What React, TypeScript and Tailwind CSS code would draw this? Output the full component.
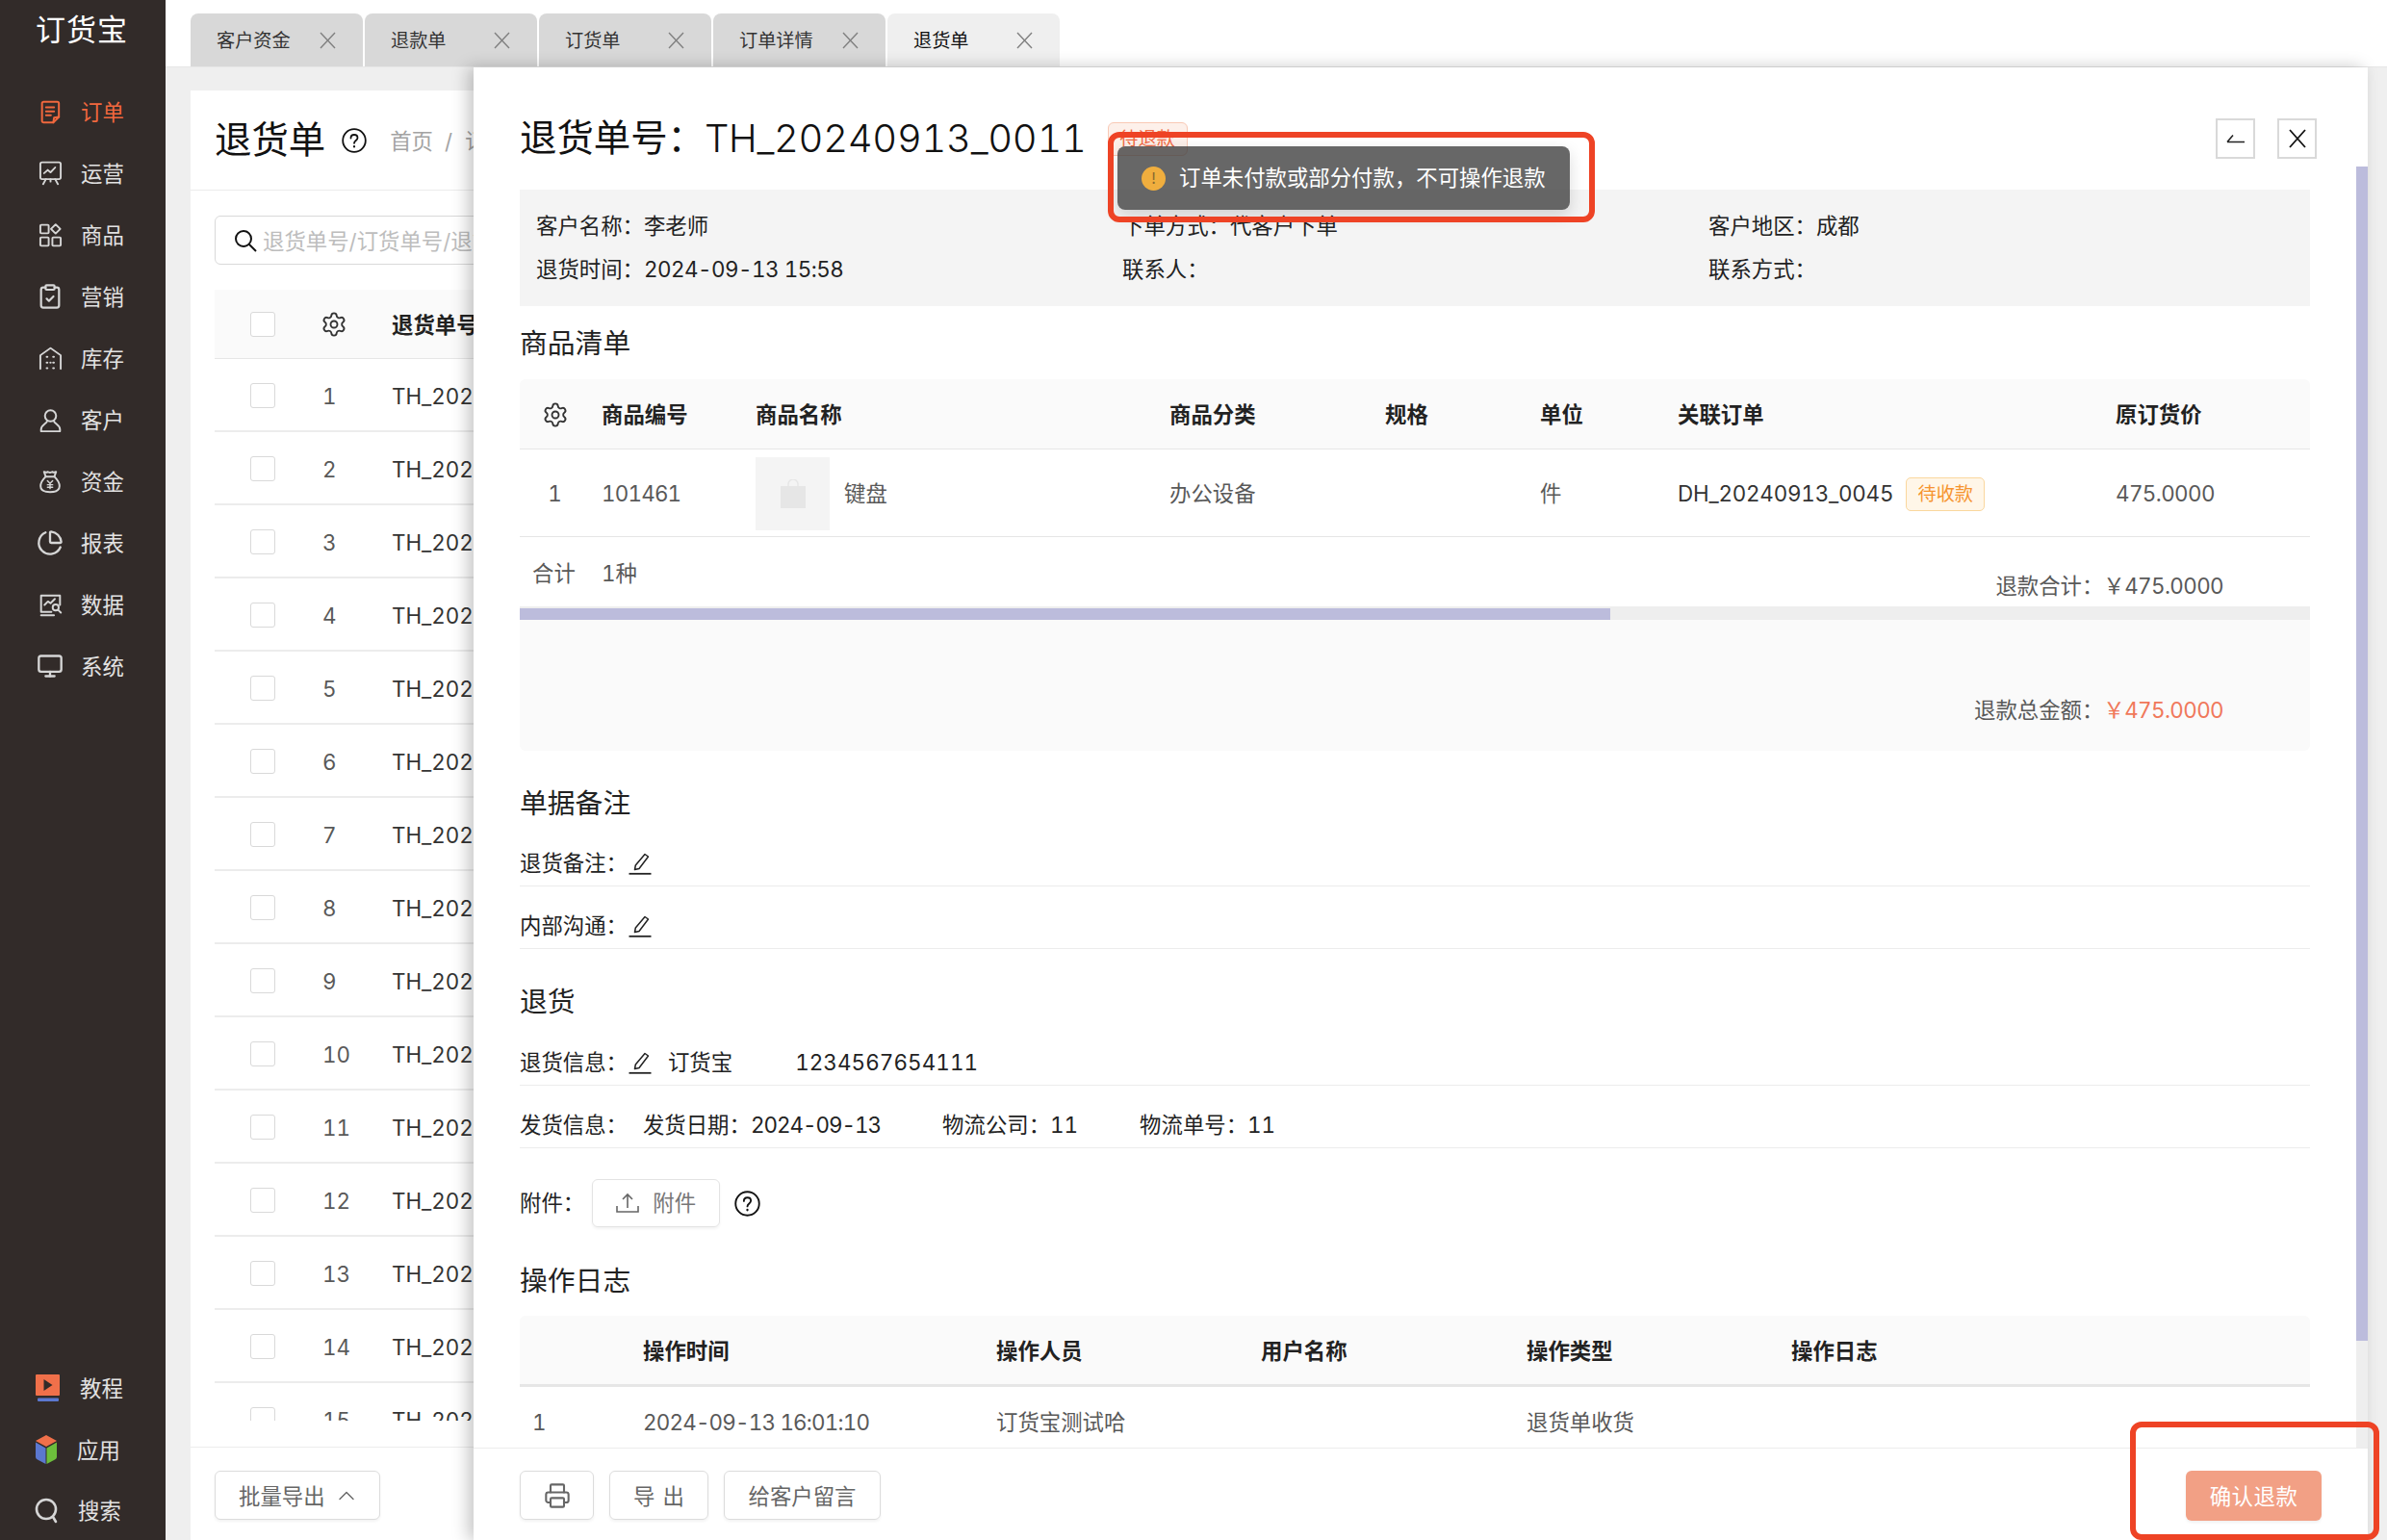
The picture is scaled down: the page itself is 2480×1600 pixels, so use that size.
import React from "react";
import { Settings, Printer, ClipboardCheck, ChartPie, Monitor, ChevronUp } from "lucide-react";

const stroke = { fill: "none", stroke: "currentColor", strokeWidth: 1.8, strokeLinecap: "round" as const, strokeLinejoin: "round" as const };

const OrderIcon = () => (
  <svg width="22" height="25" viewBox="0 0 26 30" {...stroke} strokeWidth={2.4}>
    <path d="M5 2h17a2 2 0 0 1 2 2v17l-7 7H5a2 2 0 0 1-2-2V4a2 2 0 0 1 2-2z" />
    <path d="M8 9h10M8 14h10M8 19h6M17 28l1-6 6-1" />
  </svg>
);
const OpsIcon = () => (
  <svg width="25" height="26" viewBox="0 0 26 30" preserveAspectRatio="none" {...stroke} strokeWidth={2}>
    <rect x="2" y="2" width="22" height="20" rx="2" />
    <path d="M6 15l4-4 3 3 5-6M8 22l-3 6M18 22l3 6M13 22v3" />
  </svg>
);
const GoodsIcon = () => (
  <svg width="25" height="26" viewBox="0 0 26 30" preserveAspectRatio="none" {...stroke} strokeWidth={2}>
    <rect x="2" y="3" width="9" height="10" rx="1" />
    <path d="M18.500 2.500l5 5.500-5 5.500-5-5.500z" />
    <rect x="2" y="18" width="9" height="10" rx="1" />
    <rect x="15" y="18" width="9" height="10" rx="1" />
  </svg>
);
const StockIcon = () => (
  <svg width="25" height="25" viewBox="0 0 26 30" preserveAspectRatio="none" {...stroke} strokeWidth={2}>
    <path d="M2 28V11L13 2l11 9v17" />
    <path d="M9 13h.5M16 13h.5M9 20h.5M16 20h.5M9 27h.5M16 27h.5M13 20v.1" strokeWidth={2.4} />
  </svg>
);
const UserIcon = () => (
  <svg width="25" height="25" viewBox="0 0 26 28" {...stroke} strokeWidth={2.2}>
    <circle cx="13" cy="9" r="6.500" />
    <path d="M9 15c0 3-7 4-7 10v2h22v-2c0-6-7-7-7-10" />
  </svg>
);
const BagIcon = () => (
  <svg width="24" height="25" viewBox="0 0 26 28" {...stroke} strokeWidth={2.2}>
    <path d="M8 8L6 2.500c2 1 3 1 4 0 2 1 4 1 6 0 1 1 2 1 4 0L18 8" />
    <path d="M8 8h10c3 3 6 7 6 11 0 5-4 7-11 7S2 24 2 19c0-4 3-8 6-11z" />
    <path d="M10 13l3 3 3-3M13 16v6M10 17.500h6M10 20.500h6" strokeWidth={1.6} />
  </svg>
);
const DataIcon = () => (
  <svg width="25" height="25" viewBox="0 0 26 28" {...stroke} strokeWidth={2.2}>
    <path d="M24 14V3H2v19h12M2 26h15" />
    <path d="M6 14l4-4 3 2 5-5" />
    <circle cx="19" cy="17" r="3.500" />
    <path d="M22 20l3 3" />
  </svg>
);
const PlayIcon = () => (
  <svg width="26" height="30" viewBox="0 0 26 30">
    <rect x="0" y="1" width="25" height="22" rx="1" fill="#f0704a" />
    <path d="M8.500 6l9 6-9 6z" fill="#322b29" />
    <rect x="2" y="25.500" width="22" height="3.500" rx="1" fill="#5b78d0" />
  </svg>
);
const CubeIcon = () => (
  <svg width="24" height="32" viewBox="0 0 24 32">
    <path d="M12 1l11 6-11 6L1 7z" fill="#f0704a" />
    <path d="M1 8.500l10.500 6V31L3 26.500a3 3 0 0 1-2-2.500z" fill="#5b78d0" />
    <path d="M23 8.500l-10.500 6V31l8.500-4.500a3 3 0 0 0 2-2.500z" fill="#6dbe3c" />
  </svg>
);
const SearchNavIcon = () => (
  <svg width="26" height="30" viewBox="0 0 26 30" {...stroke} strokeWidth={2.6}>
    <circle cx="12" cy="14" r="10" />
    <path d="M19 22l3 5" />
  </svg>
);
const EditIcon = () => (
  <svg width="24" height="24" viewBox="0 0 24 24" fill="none" stroke="#222" strokeWidth="1.500" strokeLinejoin="round" className="shrink-0">
    <path d="M17 2.500l3.500 2.500-9.500 12.500-4.500 1 .8-4.500z" />
    <path d="M0.500 22.800h23" strokeWidth="1.800" />
  </svg>
);
const HelpIcon = ({ size }: { size: number }) => (
  <svg width={size} height={size} viewBox="0 0 26 26" fill="none" stroke="#111" strokeWidth="1.800" strokeLinecap="round" className="shrink-0">
    <circle cx="13" cy="13" r="11.800" />
    <path d="M9.500 10.500c0-2.200 1.500-3.500 3.500-3.500s3.500 1.300 3.500 3.200c0 2.800-3.500 2.800-3.500 5.600" />
    <path d="M13 19.200v.3" strokeWidth="2.200" />
  </svg>
);
const CloseIcon = ({ w, h, color, sw }: { w: number; h: number; color: string; sw: number }) => (
  <svg width={w} height={h} viewBox={`0 0 ${w} ${h}`} fill="none" stroke={color} strokeWidth={sw} className="shrink-0">
    <path d={`M1 1L${w - 1} ${h - 1}M${w - 1} 1L1 ${h - 1}`} />
  </svg>
);

const tabs = ["客户资金", "退款单", "订货单", "订单详情", "退货单"];
const nav: [React.ReactNode, string][] = [
  [<OpsIcon />, "运营"],
  [<GoodsIcon />, "商品"],
  [<ClipboardCheck size={28} strokeWidth={1.9} />, "营销"],
  [<StockIcon />, "库存"],
  [<UserIcon />, "客户"],
  [<BagIcon />, "资金"],
  [<ChartPie size={28} strokeWidth={2} />, "报表"],
  [<DataIcon />, "数据"],
  [<Monitor size={28} strokeWidth={2} />, "系统"],
];
const rows = [1, 2, 3, 4, 5, 6, 7, 8, 9, 10, 11, 12, 13, 14, 15];

export default function App() {
  return (
    <div className="relative flex h-[1600px] w-[2480px] overflow-hidden bg-white font-[family-name:Inter,'Noto_Sans_CJK_SC',sans-serif] text-[22.4px] tabular-nums text-[#222]">
      <aside className="flex h-full w-[172px] shrink-0 flex-col bg-[#322b29] text-[#e2e2e2]">
        <div className="flex h-[84px] items-start pl-[37px] pt-[9px] text-[31px] leading-[44px] tracking-[1px] text-white">订货宝</div>
        <div className="flex h-[64px] items-center text-[#f0683e]">
          <span className="flex w-[84px] justify-center pl-[33px] pr-[13px]"><OrderIcon /></span>
          <span className="pt-[2px]">订单</span>
        </div>
        {nav.map(([icon, label]) => (
          <div key={label} className="flex h-[64px] items-center">
            <span className="flex w-[84px] justify-center pl-[33px] pr-[13px] text-[#d6d6d6]">{icon}</span>
            <span className="pt-[2px]">{label}</span>
          </div>
        ))}
        <div className="flex-1" />
        <div className="flex h-[64px] items-center">
          <span className="flex w-[83px] justify-center pl-[37px] pr-[20px]"><PlayIcon /></span>
          <span className="pt-[2px]">教程</span>
        </div>
        <div className="flex h-[64px] items-center">
          <span className="flex w-[80px] justify-center pl-[36px] pr-[20px]"><CubeIcon /></span>
          <span className="pt-[2px]">应用</span>
        </div>
        <div className="flex h-[62px] items-center">
          <span className="flex w-[81px] justify-center pl-[36px] pr-[19px] text-[#d6d6d6]"><SearchNavIcon /></span>
          <span className="pt-[2px]">搜索</span>
        </div>
      </aside>

      <main className="flex h-full min-w-0 flex-1 flex-col">
        <div className="flex h-[69px] shrink-0 gap-[2px] bg-white pl-[26px] pt-[14px]">
          {tabs.map((t, i) => (
            <div key={t} className={`flex h-[55px] w-[179px] items-center justify-between rounded-t-[8px] pl-[27px] pr-[28px] text-[19.2px] ${i === 4 ? "bg-[#efefef] text-[#111]" : "bg-[#d8d8d8] text-[#333]"}`}>
              <span className="pt-[2px]">{t}</span>
              <CloseIcon w={17} h={18} color="#808080" sw={1.4} />
            </div>
          ))}
        </div>
        <div className="flex min-h-0 flex-1 flex-col border-t border-[#e6e6e6] bg-[#efefef] pl-[26px] pr-[20px] pt-[24px]">
          <div className="flex min-h-0 flex-1 flex-col bg-white">
            <div className="flex h-[104px] shrink-0 items-center border-b border-[#ececec] pl-[25px]">
              <span className="text-[38.4px] text-[#111]">退货单</span>
              <span className="ml-[17px]"><HelpIcon size={26} /></span>
              <span className="ml-[24px] pt-[2px] text-[#a3a3a3]">首页</span>
              <span className="ml-[12px] pt-[2px] text-[#a3a3a3]">/</span>
              <span className="ml-[13px] pt-[2px] text-[#a3a3a3]">订单</span>
            </div>
            <div className="min-h-0 flex-1 px-[25px] pb-[27px] pt-[26px]">
              <div className="flex h-full flex-col overflow-hidden">
                <div className="flex h-[51px] w-[600px] shrink-0 items-center rounded-[6px] border border-[#d9d9d9] pl-[19px]">
                  <svg width="24" height="24" viewBox="0 0 24 24" fill="none" stroke="#111" strokeWidth="2" className="shrink-0">
                    <circle cx="10" cy="10" r="8" />
                    <path d="M16 16l7 7" />
                  </svg>
                  <span className="ml-[6px] pt-[2px] text-[#bdbdbd]">退货单号/订货单号/退货原因</span>
                </div>
                <div className="mt-[26px] flex h-[72px] shrink-0 items-center border-b border-[#e6e6e6] bg-[#fafafa]">
                  <span className="ml-[37px] h-[26px] w-[26px] rounded-[3px] border border-[#d9d9d9] bg-white" />
                  <span className="w-[121px] pl-[47px] text-[#333]"><Settings size={28} strokeWidth={1.6} /></span>
                  <span className="pt-[2px] font-semibold text-[#222]">退货单号</span>
                </div>
                {rows.map((n) => (
                  <div key={n} className="flex h-[76px] shrink-0 items-center border-b-2 border-[#ececec] pt-[2px]">
                    <span className="ml-[37px] h-[26px] w-[26px] rounded-[3px] border border-[#d9d9d9] bg-white" />
                    <span className="w-[121px] pl-[49px] pt-[2px] text-[#595959]">{n}</span>
                    <span className="pt-[2px] text-[#333]">TH_20240913_0011</span>
                  </div>
                ))}
              </div>
            </div>
            <div className="h-[97px] shrink-0 border-t border-[#ececec] pl-[25px] pt-[24px]">
              <div className="flex h-[51px] w-[172px] items-center gap-[8px] rounded-[6px] border border-[#dcdcdc] bg-white pl-[24px] text-[#666] shadow-[0_2px_3px_rgba(0,0,0,0.05)]">
                <span className="pt-[3px]">批量导出</span>
                <ChevronUp size={28} strokeWidth={1.2} />
              </div>
            </div>
          </div>
        </div>
      </main>

      {/* drawer over the list page */}
      <section className="absolute bottom-0 left-[492px] right-[20px] top-[70px] flex flex-col bg-white shadow-[-6px_0_16px_rgba(0,0,0,0.22)]">
        <div className="flex min-h-0 flex-1">
          <div className="min-w-0 flex-1 overflow-hidden pl-[48px] pr-[48px] pt-[53px]">
            <div className="flex h-[42px] items-center justify-between">
              <div className="flex items-center">
                <span className="text-[38.4px] text-[#111]">退货单号：</span>
                <span className="text-[40px] font-light tracking-[-0.3px] text-[#111]">TH_20240913_0011</span>
                <span className="ml-[22px] flex h-[35px] w-[83px] items-center justify-center rounded-[6px] border border-[#f9c9b5] bg-[#fdf0ea] text-[19.2px] text-[#f06b45]">待退款</span>
              </div>
              <div className="mr-[-7px] flex gap-[23px]">
                <div className="flex h-[42px] w-[41px] items-center justify-center border-2 border-[#d9d9d9]">
                  <svg width="20" height="10" viewBox="0 0 20 10" fill="none" stroke="#222" strokeWidth="1.600">
                    <path d="M1 8.500h18M1 8.500l6-7" />
                  </svg>
                </div>
                <div className="flex h-[42px] w-[41px] items-center justify-center border-2 border-[#d9d9d9]">
                  <CloseIcon w={18} h={20} color="#111" sw={1.8} />
                </div>
              </div>
            </div>

            <div className="mt-[32px] grid h-[121px] grid-cols-[609px_609px_1fr] content-start bg-[#f4f4f4] pl-[17px] pt-[15px] leading-[45px]">
              <div>客户名称：<span>李老师</span></div>
              <div>下单方式：代客户下单</div>
              <div>客户地区：成都</div>
              <div>退货时间：<span className="tracking-[-0.5px]">2024-09-13 15:58</span></div>
              <div>联系人：</div>
              <div>联系方式：</div>
            </div>

            <div className="flex h-[76px] items-center pt-[2px] text-[28.8px]">商品清单</div>

            <div className="grid h-[73px] grid-cols-[85px_160px_430px_224px_161px_143px_455px_202px] items-center rounded-t-[6px] border-b border-[#e6e6e6] bg-[#fafafa] pt-[2px] font-semibold">
              <span className="flex justify-center pr-[12px] text-[#333]"><Settings size={28} strokeWidth={1.6} /></span>
              <span>商品编号</span>
              <span>商品名称</span>
              <span>商品分类</span>
              <span>规格</span>
              <span>单位</span>
              <span>关联订单</span>
              <span>原订货价</span>
            </div>
            <div className="grid h-[91px] grid-cols-[85px_160px_430px_224px_161px_143px_455px_202px] items-center border-b border-[#e6e6e6] pt-[2px] text-[#595959]">
              <span className="pr-[12px] text-center">1</span>
              <span className="tracking-[-0.8px]">101461</span>
              <span className="flex items-center">
                <span className="flex h-[76px] w-[77px] items-center justify-center bg-[#f4f4f4]">
                  <svg width="26" height="30" viewBox="0 0 26 30" fill="#e6e6e6" stroke="none">
                    <path d="M0 7h26v23H0z" />
                    <path d="M8 8V5a5 5 0 0 1 10 0v3" fill="none" stroke="#e6e6e6" strokeWidth="1.500" />
                  </svg>
                </span>
                <span className="ml-[15px]">键盘</span>
              </span>
              <span>办公设备</span>
              <span />
              <span>件</span>
              <span className="flex items-center">
                <span className="tracking-[-0.2px] text-[#333]">DH_20240913_0045</span>
                <span className="ml-[13px] flex h-[35px] w-[82px] items-center justify-center rounded-[5px] border border-[#fad79e] bg-[#fff6e8] text-[19.2px] text-[#f6942f]">待收款</span>
              </span>
              <span className="tracking-[-0.6px]">475.0000</span>
            </div>
            <div className="relative flex h-[72px] justify-between text-[#595959]">
              <div className="flex h-[76px] items-center">
                <span className="ml-[13px] w-[72px]">合计</span>
                <span>1种</span>
              </div>
              <div className="mr-[90px] flex h-full items-end pb-[6px] leading-[30px]">
                <span>退款合计：</span>
                <span className="tracking-[-0.6px]">￥475.0000</span>
              </div>
            </div>
            <div className="h-[14px] bg-[#eeeeee] pt-[2px]">
              <div className="h-[12px] w-[1133px] bg-[#bcbcdc]" />
            </div>
            <div className="flex h-[136px] items-end justify-end rounded-b-[6px] bg-[#fafafa] pb-[27px] pr-[90px] leading-[30px] text-[#595959]">
              <span>退款总金额：</span>
              <span className="tracking-[-0.6px] text-[#f0785a]">￥475.0000</span>
            </div>

            <div className="mt-[33px] flex h-[40px] items-center pt-[3px] text-[28.8px]">单据备注</div>
            <div className="mt-[20px] flex h-[48px] items-center gap-[1px] border-b border-[#ececec]">
              <span>退货备注：</span>
              <EditIcon />
            </div>
            <div className="mt-[17px] flex h-[48px] items-center gap-[1px] border-b border-[#ececec]">
              <span>内部沟通：</span>
              <EditIcon />
            </div>

            <div className="mt-[33px] flex h-[40px] items-center pt-[3px] text-[28.8px]">退货</div>
            <div className="mt-[21px] flex h-[48px] items-center border-b border-[#ececec]">
              <span>退货信息：</span>
              <span className="ml-[1px]"><EditIcon /></span>
              <span className="ml-[17px]">订货宝</span>
              <span className="ml-[65px] tracking-[0.1px]">1234567654111</span>
            </div>
            <div className="mt-[17px] flex h-[48px] items-center border-b border-[#ececec]">
              <span>发货信息：</span>
              <span className="ml-[16px]">发货日期：</span>
              <span className="tracking-[-1px]">2024-09-13</span>
              <span className="ml-[64px]">物流公司：</span>
              <span>11</span>
              <span className="ml-[64px]">物流单号：</span>
              <span>11</span>
            </div>
            <div className="mt-[32px] flex h-[50px] items-center">
              <span>附件：</span>
              <div className="ml-[8px] flex h-[50px] w-[133px] items-center justify-center gap-[14px] rounded-[6px] border border-[#e3e3e3] text-[#777] shadow-[0_2px_3px_rgba(0,0,0,0.05)]">
                <svg width="24" height="24" viewBox="0 0 24 24" fill="none" stroke="#666" strokeWidth="1.600">
                  <path d="M12 17V3M7 8l5-5 5 5M1 15v6h22v-6" />
                </svg>
                <span>附件</span>
              </div>
              <span className="ml-[15px]"><HelpIcon size={27} /></span>
            </div>

            <div className="mt-[34px] flex h-[40px] items-center pt-[3px] text-[28.8px]">操作日志</div>
            <div className="mt-[18px] grid h-[74px] grid-cols-[128px_367px_275px_276px_275px_1fr] items-center rounded-t-[6px] border-b-[3px] border-[#e6e6e6] bg-[#fafafa] pt-[2px] font-semibold">
              <span />
              <span>操作时间</span>
              <span>操作人员</span>
              <span>用户名称</span>
              <span>操作类型</span>
              <span>操作日志</span>
            </div>
            <div className="grid h-[72px] grid-cols-[128px_367px_275px_276px_275px_1fr] items-center pt-[2px] text-[#595959]">
              <span className="pl-[13px]">1</span>
              <span className="tracking-[-0.8px]">2024-09-13 16:01:10</span>
              <span>订货宝测试哈</span>
              <span />
              <span>退货单收货</span>
              <span />
            </div>
          </div>
          <div className="flex w-[12px] shrink-0 flex-col pt-[103px]">
            <div className="h-[1220px] bg-[#bcbcdc]" />
            <div className="flex-1 bg-[#eeeeee]" />
          </div>
        </div>
        <div className="flex h-[96px] shrink-0 items-start justify-between border-t border-[#ececec] px-[48px] pt-[23px] text-[#666]">
          <div className="flex gap-[16px]">
            <div className="flex h-[51px] w-[77px] items-center justify-center rounded-[6px] border border-[#dcdcdc] shadow-[0_2px_3px_rgba(0,0,0,0.05)]">
              <Printer size={28} strokeWidth={1.8} />
            </div>
            <div className="flex h-[51px] w-[103px] items-center justify-center rounded-[6px] border border-[#dcdcdc] pl-[8px] pt-[3px] tracking-[8px] shadow-[0_2px_3px_rgba(0,0,0,0.05)]">导出</div>
            <div className="flex h-[51px] w-[163px] items-center justify-center rounded-[6px] border border-[#dcdcdc] pt-[3px] shadow-[0_2px_3px_rgba(0,0,0,0.05)]">给客户留言</div>
          </div>
          <div className="flex h-[52px] w-[141px] items-center justify-center rounded-[6px] bg-[#f2a085] pt-[2px] tracking-[0.5px] text-white shadow-[0_2px_3px_rgba(0,0,0,0.06)]">确认退款</div>
        </div>
      </section>

      {/* toast */}
      <div className="absolute left-[1161px] top-[152px] flex h-[66px] w-[470px] items-center rounded-[8px] bg-[rgba(60,60,60,0.78)] pl-[25px] text-white shadow-[0_6px_16px_rgba(0,0,0,0.15)]">
        <span className="flex h-[25px] w-[25px] items-center justify-center rounded-full bg-[#f0ae3e] text-[16px] leading-none text-[#8a6a30]">!</span>
        <span className="ml-[14px]">订单未付款或部分付款，不可操作退款</span>
      </div>

      {/* red annotation boxes */}
      <div className="absolute left-[1151px] top-[137px] h-[94px] w-[506px] rounded-[12px] border-[6px] border-[#ee4325]" />
      <div className="absolute left-[2213px] top-[1477px] h-[123px] w-[259px] rounded-[12px] border-[6px] border-[#ee4325]" />
    </div>
  );
}
